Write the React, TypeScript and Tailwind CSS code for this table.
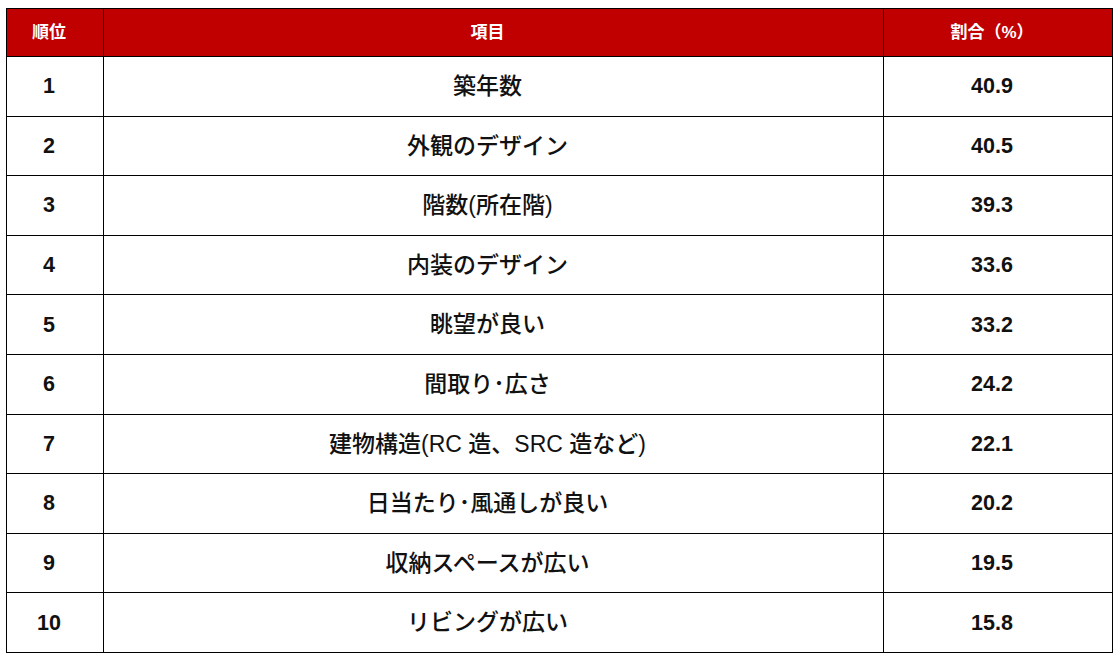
import React from "react";

const rows = [
  { rank: 1, item: "築年数", pct: "40.9" },
  { rank: 2, item: "外観のデザイン", pct: "40.5" },
  { rank: 3, item: "階数(所在階)", pct: "39.3" },
  { rank: 4, item: "内装のデザイン", pct: "33.6" },
  { rank: 5, item: "眺望が良い", pct: "33.2" },
  { rank: 6, item: "間取り･広さ", pct: "24.2" },
  { rank: 7, item: "建物構造(RC 造、SRC 造など)", pct: "22.1" },
  { rank: 8, item: "日当たり･風通しが良い", pct: "20.2" },
  { rank: 9, item: "収納スペースが広い", pct: "19.5" },
  { rank: 10, item: "リビングが広い", pct: "15.8" },
];

export default function App() {
  return (
    <div
      className="w-[1118px] h-[658px] bg-white pt-2 pl-[6px]"
      style={{ fontFamily: '"Liberation Sans", "Noto Sans CJK JP", sans-serif' }}
    >
      <table className="w-[1106px] border-collapse table-fixed text-[#111]">
        <colgroup>
          <col className="w-[97px]" />
          <col className="w-[780px]" />
          <col className="w-[229px]" />
        </colgroup>
        <thead>
          <tr className="h-[48px] bg-[#c00000] text-white text-[17px] font-bold">
            <th className="border border-black pr-3">順位</th>
            <th className="border border-black pr-3">項目</th>
            <th className="border border-black pr-3">割合（%）</th>
          </tr>
        </thead>
        <tbody>
          {rows.map((r) => (
            <tr key={r.rank} className="h-[59.6px] text-center">
              <td className="border border-black pr-3 text-[21.5px] font-bold">{r.rank}</td>
              <td className="border border-black pr-3 text-[23px] font-medium">{r.item}</td>
              <td className="border border-black pr-3 text-[21.5px] font-bold">{r.pct}</td>
            </tr>
          ))}
        </tbody>
      </table>
    </div>
  );
}
